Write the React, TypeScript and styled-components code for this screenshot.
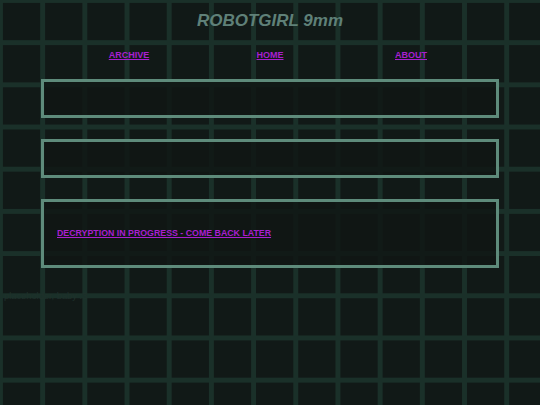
import React from "react";
import styled, { createGlobalStyle } from "styled-components";

const GlobalStyle = createGlobalStyle`
	html, body {
		margin: 0;
		padding: 0;
		height: 100%;
	}

	body {
		background-color: #111917;
		background-image:
			linear-gradient(to right, #1a3029 0, #1a3029 5px, transparent 5px),
			linear-gradient(to bottom, #1a3029 0, #1a3029 5px, transparent 5px);
		background-size: 42.2px 42.2px;
		background-position: -2px -2px;
		font-family: "Liberation Sans", Arial, sans-serif;
	}
`;

const navItems = ["ARCHIVE", "HOME", "ABOUT"];

export default function App() {
	return (
		<>
			<GlobalStyle />
			<Page>
				<Title>ROBOTGIRL 9mm</Title>
				<Nav>
					{navItems.map((item) => (
						<NavCell key={item}>
							<PinkLink href="#">{item}</PinkLink>
						</NavCell>
					))}
				</Nav>
				<Panels>
					<Panel $height={39} />
					<Panel $height={39} />
					<Panel $height={69}>
						<PanelText>
							<PinkLink href="#" $size={8.8}>
								DECRYPTION IN PROGRESS - COME BACK LATER
							</PinkLink>
						</PanelText>
					</Panel>
				</Panels>
				<Hidden>placeholder, baby :3</Hidden>
			</Page>
		</>
	);
}

const Page = styled.div`
	padding-top: 10px;
	min-height: 405px;
	box-sizing: border-box;
`;

const Title = styled.h1`
	margin: 0;
	text-align: center;
	font-size: 17px;
	line-height: 22px;
	font-weight: bold;
	font-style: italic;
	color: #5f8078;
`;

const Nav = styled.div`
	display: grid;
	grid-template-columns: repeat(3, 141px);
	justify-content: center;
	margin-top: 15px;
`;

const NavCell = styled.div`
	text-align: center;
	line-height: 12px;
`;

const PinkLink = styled.a<{ $size?: number }>`
	color: #a81fd0;
	font-size: ${(p) => p.$size ?? 9}px;
	font-weight: bold;
	text-decoration: underline;
`;

const Panels = styled.div`
	display: flex;
	flex-direction: column;
	gap: 21px;
	margin: 18px 41px 0;
`;

const Panel = styled.div<{ $height: number }>`
	height: ${(p) => p.$height}px;
	box-sizing: border-box;
	border: 3px solid #5e8b7b;
	background-color: rgba(16, 22, 20, 0.82);
`;

const PanelText = styled.div`
	padding: 23px 13px 0;
	line-height: 12px;
`;

const Hidden = styled.div`
	margin: 22px 0 0 4px;
	font-size: 9.3px;
	line-height: 12px;
	color: #1f302b;
`;
